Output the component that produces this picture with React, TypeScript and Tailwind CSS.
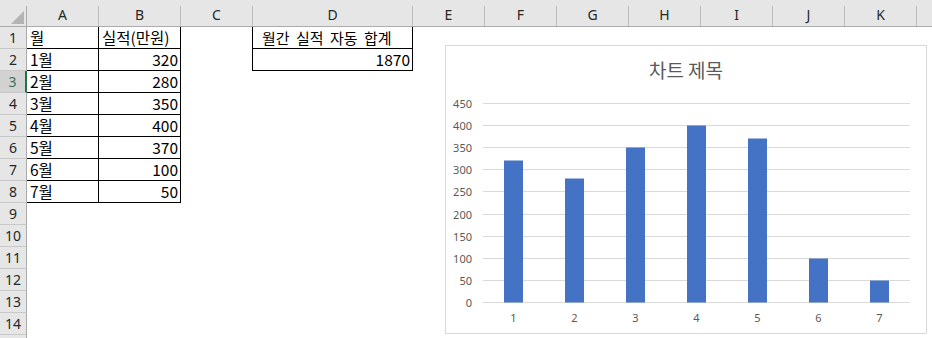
import React from "react";

const COLS = ["A", "B", "C", "D", "E", "F", "G", "H", "I", "J", "K", ""];

type Cell = { text: string; right?: boolean; pl?: boolean };

const cells: Record<string, Cell> = {
  "1-1": { text: "월" },
  "1-2": { text: "실적(만원)" },
  "1-4": { text: "월간 실적 자동 합계", pl: true },
  "2-4": { text: "1870", right: true },
};
const values = [320, 280, 350, 400, 370, 100, 50];
values.forEach((v, i) => {
  cells[`${i + 2}-1`] = { text: `${i + 1}월` };
  cells[`${i + 2}-2`] = { text: String(v), right: true };
});

function borderFor(r: number, c: number): string {
  if ((c === 1 || c === 2) && r <= 8) return "border-r border-b border-black";
  if (c === 4 && r <= 2) return "border-r border-b border-black";
  if (c === 3 && r <= 2) return "border-r border-black";
  return "";
}

function Chart() {
  const x0 = 37;
  const x1 = 464;
  const zeroY = 256;
  const scale = 199 / 450;
  const cw = (x1 - x0) / 7;
  const ticks = [0, 50, 100, 150, 200, 250, 300, 350, 400, 450];
  return (
    <div className="absolute left-[445px] top-[45px] w-[482px] h-[289px] border border-[#d9d9d9] bg-white">
      <svg width="480" height="287" className="block font-['Noto_Sans',sans-serif] text-[11px]">
        <text
          x="240"
          y="23"
          textAnchor="middle"
          dominantBaseline="central"
          fill="#595959"
          className="font-['Noto_Sans_CJK_KR',sans-serif] text-[19px]"
        >
          차트 제목
        </text>
        {ticks.map((t) => {
          const y = Math.round(zeroY - t * scale) + 0.5;
          return (
            <g key={t}>
              <line x1={x0} x2={x1} y1={y} y2={y} stroke="#d9d9d9" strokeWidth="1" />
              <text x="26" y={y} textAnchor="end" dominantBaseline="central" fill="#595959">
                {t}
              </text>
            </g>
          );
        })}
        {values.map((v, i) => {
          const cx = x0 + cw * (i + 0.5);
          const h = Math.round(v * scale);
          const bx = Math.round(cx - 9.5);
          return (
            <g key={i}>
              <rect x={bx} y={zeroY + 0.5 - h} width="19" height={h} fill="#4472c4" />
              <text x={cx} y="271" textAnchor="middle" dominantBaseline="central" fill="#595959">
                {i + 1}
              </text>
            </g>
          );
        })}
      </svg>
    </div>
  );
}

export default function App() {
  const rows = Array.from({ length: 15 }, (_, i) => i + 1);
  return (
    <div className="relative w-[932px] h-[338px] overflow-hidden bg-white">
      <div className="grid grid-cols-[27px_72px_82px_72px_160px_72px_72px_72px_72px_72px_72px_72px_15px] grid-rows-[27px_repeat(15,22px)]">
        {/* corner */}
        <div className="bg-[#e6e6e6] border-b border-[#ababab] pt-[6px]">
          <div className="h-[20px] border-r border-[#ababab]">
            <svg width="26" height="20" className="block">
              <polygon points="24,5 24,18 11,18" fill="#b4b4b4" />
            </svg>
          </div>
        </div>
        {COLS.map((c, i) => (
          <div key={i} className="bg-[#e6e6e6] border-b border-[#ababab] pt-[6px]">
            <div
              className={`h-[20px] flex items-center justify-center pb-[3px] text-[14px] leading-none text-[#262626] font-['Noto_Sans',sans-serif] ${
                c ? "border-r border-[#bdbdbd]" : ""
              }`}
            >
              {c}
            </div>
          </div>
        ))}
        {rows.map((r) => (
          <React.Fragment key={r}>
            <div
              className={`flex items-center justify-center text-[14px] leading-none border-b border-b-[#c8c8c8] font-['Noto_Sans',sans-serif] ${
                r === 3
                  ? "bg-[#d2d2d2] text-[#3f6f5a] border-r-2 border-r-[#217346]"
                  : "bg-[#e6e6e6] text-[#262626] border-r border-r-[#ababab]"
              }`}
            >
              {r <= 14 ? r : ""}
            </div>
            {COLS.map((_, ci) => {
              const c = ci + 1;
              const cell = cells[`${r}-${c}`];
              return (
                <div
                  key={c}
                  className={`flex items-center whitespace-nowrap text-[15.5px] leading-none text-black font-['Noto_Sans_CJK_KR',sans-serif] ${borderFor(
                    r,
                    c
                  )} ${
                    cell?.right
                      ? "justify-end pr-[2px]"
                      : cell?.pl
                      ? "pl-[9px] [word-spacing:3px] text-[15px]"
                      : "pl-[3px]"
                  }`}
                >
                  {cell?.text}
                </div>
              );
            })}
          </React.Fragment>
        ))}
      </div>
      <Chart />
    </div>
  );
}
